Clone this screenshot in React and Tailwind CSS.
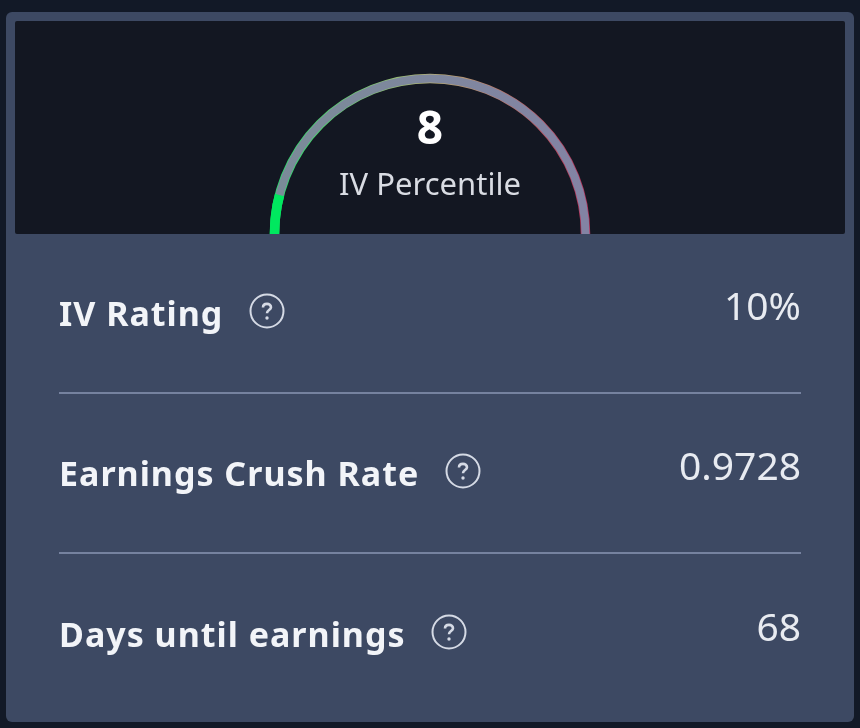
import React from 'react';

const rows = [
  { label: 'IV Rating', value: '10%' },
  { label: 'Earnings Crush Rate', value: '0.9728' },
  { label: 'Days until earnings', value: '68' },
];

function HelpIcon() {
  return (
    <svg className="w-[36px] h-[36px] shrink-0 -translate-y-[2px]" viewBox="0 0 36 36" fill="none" stroke="#d5dae5" strokeWidth="2">
      <circle cx="18" cy="18" r="16.5" />
      <path d="M14 14.5c0-2.300 1.800-3.600 4-3.600s4 1.300 4 3.300c0 2.800-4 3-4 6" strokeWidth="2.600" />
      <circle cx="18" cy="25" r="1.700" fill="#d5dae5" stroke="none" />
    </svg>
  );
}

function Gauge() {
  const arc = 'M274.500 213 A155.500 155.500 0 0 1 585.500 213';
  return (
    <svg className="absolute left-0 top-0" width="830" height="213" viewBox="15 0 830 213">
      <defs>
        <linearGradient id="edge" x1="0" y1="0" x2="1" y2="0">
          <stop offset="0" stopColor="#22e06a" />
          <stop offset="0.5" stopColor="#b5b07a" />
          <stop offset="1" stopColor="#b4305a" />
        </linearGradient>
        <linearGradient id="track" x1="0" y1="0" x2="1" y2="0">
          <stop offset="0" stopColor="#7a8b98" />
          <stop offset="1" stopColor="#8383a4" />
        </linearGradient>
      </defs>
      <path d={arc} fill="none" stroke="url(#edge)" strokeWidth="9.500" />
      <path d={arc} fill="none" stroke="url(#track)" strokeWidth="8" />
      <path d="M274.500 213 A155.500 155.500 0 0 1 279.500 174" fill="none" stroke="#00e85f" strokeWidth="9.500" />
    </svg>
  );
}

export default function App() {
  return (
    <div className="w-[860px] h-[728px] bg-[#121927] pt-[12px] pb-[6px] px-[6px] font-['Noto_Sans',sans-serif] text-white">
      <div className="h-[710px] rounded-[6px] bg-[#3d4963] flex flex-col overflow-hidden blur-[0.5px]">
        <div className="relative mx-[9px] mt-[9px] h-[213px] shrink-0 rounded-[2px] bg-[#131722] flex flex-col items-center">
          <Gauge />
          <div className="relative mt-[76px] text-[46px] leading-[58px] font-bold">8</div>
          <div className="relative mt-[9px] text-[31px] leading-[38px] text-[#d9dce3]">IV Percentile</div>
        </div>
        <div className="flex-1 px-[53px] flex flex-col">
          {rows.map((row, i) => (
            <div
              key={row.label}
              className={`h-[160px] shrink-0 flex items-center justify-between ${i < rows.length - 1 ? 'border-b-2 border-[#76829f]' : ''}`}
            >
              <div className="flex items-center gap-[26px]">
                <span className="text-[34px] leading-[40px] font-bold tracking-[1px] text-[#f2f4f8]">{row.label}</span>
                <HelpIcon />
              </div>
              <span className="text-[39px] leading-[46px] text-[#e8ebf1] -translate-y-[8px]">{row.value}</span>
            </div>
          ))}
        </div>
      </div>
    </div>
  );
}
